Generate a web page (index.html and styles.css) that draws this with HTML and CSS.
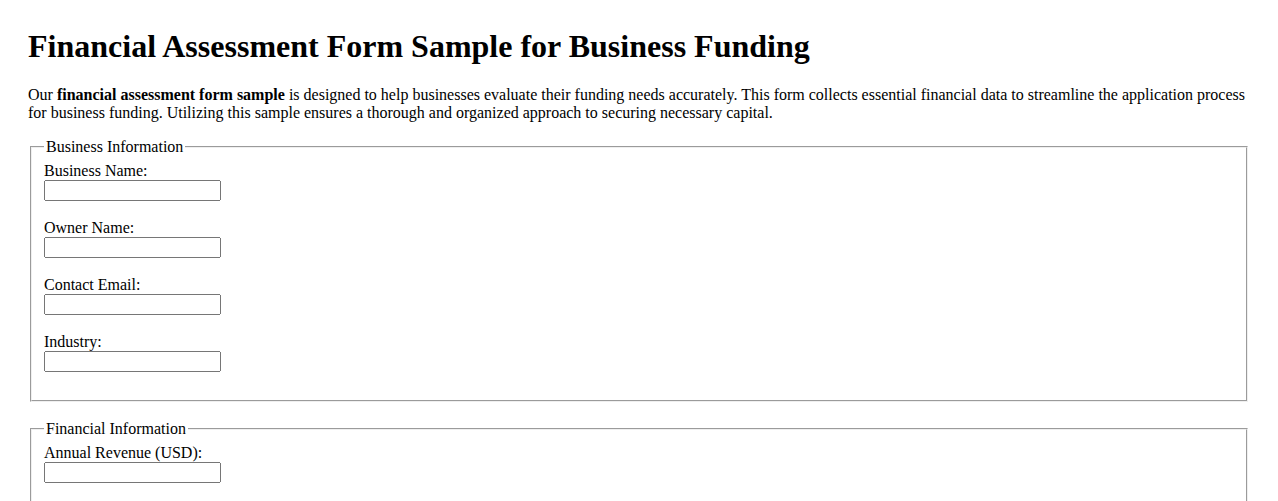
FILE: index.html
```html
<!DOCTYPE html>
<html lang="en">
<head>
  <meta charset="UTF-8">
  <meta name="viewport" content="width=device-width, initial-scale=1.0">
  <title>Financial Assessment Form Sample for Business Funding</title>
  <link rel="stylesheet" href="styles.css">
</head>
<body>
  <h1>Financial Assessment Form Sample for Business Funding</h1>
  <p>Our <strong>financial assessment form sample</strong> is designed to help businesses evaluate their funding needs accurately. This form collects essential financial data to streamline the application process for business funding. Utilizing this sample ensures a thorough and organized approach to securing necessary capital.</p>

  <form>
    <fieldset>
      <legend>Business Information</legend>
      <label for="businessName">Business Name:</label><br>
      <input type="text" id="businessName" name="businessName"><br><br>
      <label for="ownerName">Owner Name:</label><br>
      <input type="text" id="ownerName" name="ownerName"><br><br>
      <label for="email">Contact Email:</label><br>
      <input type="email" id="email" name="email"><br><br>
      <label for="industry">Industry:</label><br>
      <input type="text" id="industry" name="industry"><br><br>
    </fieldset>

    <fieldset>
      <legend>Financial Information</legend>
      <label for="revenue">Annual Revenue (USD):</label><br>
      <input type="number" id="revenue" name="revenue"><br><br>
      <label for="expenses">Annual Expenses (USD):</label><br>
      <input type="number" id="expenses" name="expenses"><br><br>
      <label for="amount">Funding Amount Requested (USD):</label><br>
      <input type="number" id="amount" name="amount"><br><br>
    </fieldset>
  </form>
</body>
</html>
```

FILE: styles.css
```css
body {
  font-family: "Liberation Serif", "Times New Roman", serif;
  margin: 8px;
  padding: 20px;
}
h1 { margin-top: 0; }
fieldset {
  margin: 0 2px 18px;
}
input {
  font-family: "Liberation Sans", Arial, sans-serif;
  box-sizing: border-box;
  width: 177px;
}
```
